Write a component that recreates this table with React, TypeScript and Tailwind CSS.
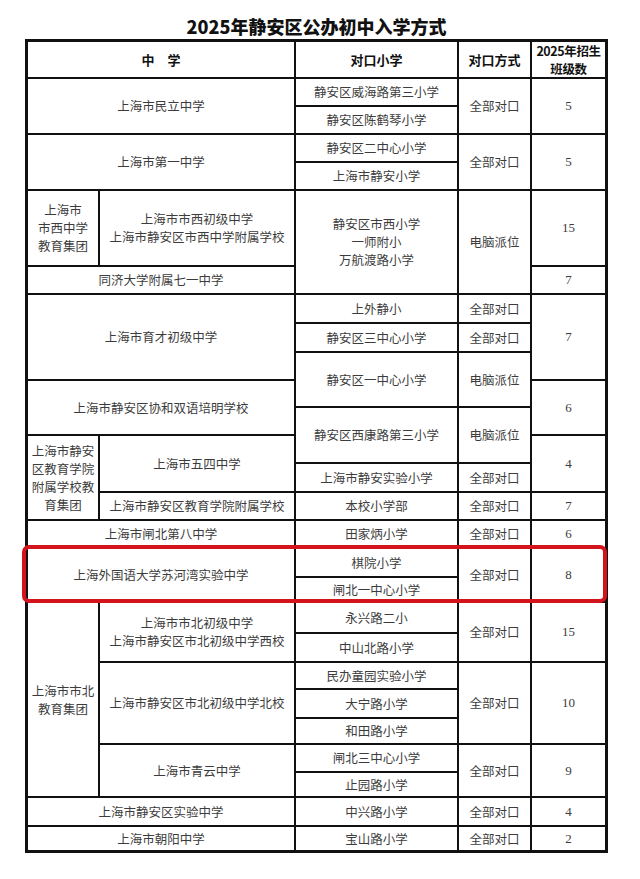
import React from "react";

type CellProps = {
  className?: string;
  children?: React.ReactNode;
};

// plain table cell: white box sitting in the black grid gap lines
function Cell({ className = "", children }: CellProps) {
  return (
    <div
      className={`bg-white flex flex-col items-center justify-center text-center leading-[18px] text-[12.5px] text-[#3c3c3c] ${className}`}
    >
      {children}
    </div>
  );
}

function Num({ className = "", children }: CellProps) {
  return (
    <Cell className={`font-['Liberation_Serif',serif] text-[13px] ${className}`}>
      {children}
    </Cell>
  );
}

export default function App() {
  return (
    <div className="min-h-[879px] bg-white font-['Noto_Sans_CJK_SC',sans-serif]">
      <div className="ml-[25px] w-[583px] h-[39px] pt-[14px] text-center text-[18px] leading-[24px] font-black text-[#111]">
        2025年静安区公办初中入学方式
      </div>

      <div className="ml-[25px] w-[583px] grid gap-[2px] border-[3px] border-[#111] bg-[#111] grid-cols-[70px_194px_161px_71px_73px] grid-rows-[35px_26px_26px_26px_26px_74px_26px_27px_27px_26px_25px_26px_26px_27px_26px_26px_27px_23px_29px_27px_25px_27px_24px_26px_23px_27px_23px]">
        {/* header */}
        <Cell className="col-start-1 col-end-3 row-start-1 row-end-2 font-bold text-[13px] text-[#111]">
          中　学
        </Cell>
        <Cell className="col-start-3 col-end-4 row-start-1 row-end-2 font-bold text-[13px] text-[#111]">
          对口小学
        </Cell>
        <Cell className="col-start-4 col-end-5 row-start-1 row-end-2 font-bold text-[13px] text-[#111]">
          对口方式
        </Cell>
        <Cell className="col-start-5 col-end-6 row-start-1 row-end-2 font-bold text-[11.5px] text-[#111] tracking-[-0.4px] leading-[17px]">
          <span>2025年招生</span>
          <span>班级数</span>
        </Cell>

        {/* 民立 */}
        <Cell className="col-start-1 col-end-3 row-start-2 row-end-4">上海市民立中学</Cell>
        <Cell className="col-start-3 col-end-4 row-start-2 row-end-3">静安区威海路第三小学</Cell>
        <Cell className="col-start-3 col-end-4 row-start-3 row-end-4">静安区陈鹤琴小学</Cell>
        <Cell className="col-start-4 col-end-5 row-start-2 row-end-4">全部对口</Cell>
        <Num className="col-start-5 col-end-6 row-start-2 row-end-4">5</Num>

        {/* 第一 */}
        <Cell className="col-start-1 col-end-3 row-start-4 row-end-6">上海市第一中学</Cell>
        <Cell className="col-start-3 col-end-4 row-start-4 row-end-5">静安区二中心小学</Cell>
        <Cell className="col-start-3 col-end-4 row-start-5 row-end-6">上海市静安小学</Cell>
        <Cell className="col-start-4 col-end-5 row-start-4 row-end-6">全部对口</Cell>
        <Num className="col-start-5 col-end-6 row-start-4 row-end-6">5</Num>

        {/* 市西 */}
        <Cell className="col-start-1 col-end-2 row-start-6 row-end-7">
          <span>上海市</span>
          <span>市西中学</span>
          <span>教育集团</span>
        </Cell>
        <Cell className="col-start-2 col-end-3 row-start-6 row-end-7">
          <span>上海市市西初级中学</span>
          <span>上海市静安区市西中学附属学校</span>
        </Cell>
        <Cell className="col-start-3 col-end-4 row-start-6 row-end-8">
          <span>静安区市西小学</span>
          <span>一师附小</span>
          <span>万航渡路小学</span>
        </Cell>
        <Cell className="col-start-4 col-end-5 row-start-6 row-end-8">电脑派位</Cell>
        <Num className="col-start-5 col-end-6 row-start-6 row-end-7">15</Num>
        <Cell className="col-start-1 col-end-3 row-start-7 row-end-8">同济大学附属七一中学</Cell>
        <Num className="col-start-5 col-end-6 row-start-7 row-end-8">7</Num>

        {/* 育才 / 协和 */}
        <Cell className="col-start-1 col-end-3 row-start-8 row-end-11">上海市育才初级中学</Cell>
        <Cell className="col-start-3 col-end-4 row-start-8 row-end-9">上外静小</Cell>
        <Cell className="col-start-4 col-end-5 row-start-8 row-end-9">全部对口</Cell>
        <Cell className="col-start-3 col-end-4 row-start-9 row-end-10">静安区三中心小学</Cell>
        <Cell className="col-start-4 col-end-5 row-start-9 row-end-10">全部对口</Cell>
        <Cell className="col-start-3 col-end-4 row-start-10 row-end-12">静安区一中心小学</Cell>
        <Cell className="col-start-4 col-end-5 row-start-10 row-end-12">电脑派位</Cell>
        <Num className="col-start-5 col-end-6 row-start-8 row-end-11">7</Num>
        <Cell className="col-start-1 col-end-3 row-start-11 row-end-13">上海市静安区协和双语培明学校</Cell>
        <Num className="col-start-5 col-end-6 row-start-11 row-end-13">6</Num>
        <Cell className="col-start-3 col-end-4 row-start-12 row-end-14">静安区西康路第三小学</Cell>
        <Cell className="col-start-4 col-end-5 row-start-12 row-end-14">电脑派位</Cell>

        {/* 教育学院 group */}
        <Cell className="col-start-1 col-end-2 row-start-13 row-end-16">
          <span>上海市静安</span>
          <span>区教育学院</span>
          <span>附属学校教</span>
          <span>育集团</span>
        </Cell>
        <Cell className="col-start-2 col-end-3 row-start-13 row-end-15">上海市五四中学</Cell>
        <Cell className="col-start-3 col-end-4 row-start-14 row-end-15">上海市静安实验小学</Cell>
        <Cell className="col-start-4 col-end-5 row-start-14 row-end-15">全部对口</Cell>
        <Num className="col-start-5 col-end-6 row-start-13 row-end-15">4</Num>
        <Cell className="col-start-2 col-end-3 row-start-15 row-end-16">上海市静安区教育学院附属学校</Cell>
        <Cell className="col-start-3 col-end-4 row-start-15 row-end-16">本校小学部</Cell>
        <Cell className="col-start-4 col-end-5 row-start-15 row-end-16">全部对口</Cell>
        <Num className="col-start-5 col-end-6 row-start-15 row-end-16">7</Num>

        {/* 闸北第八 */}
        <Cell className="col-start-1 col-end-3 row-start-16 row-end-17">上海市闸北第八中学</Cell>
        <Cell className="col-start-3 col-end-4 row-start-16 row-end-17">田家炳小学</Cell>
        <Cell className="col-start-4 col-end-5 row-start-16 row-end-17">全部对口</Cell>
        <Num className="col-start-5 col-end-6 row-start-16 row-end-17">6</Num>

        {/* 苏河湾 */}
        <Cell className="col-start-1 col-end-3 row-start-17 row-end-19">上海外国语大学苏河湾实验中学</Cell>
        <Cell className="col-start-3 col-end-4 row-start-17 row-end-18">棋院小学</Cell>
        <Cell className="col-start-3 col-end-4 row-start-18 row-end-19">闸北一中心小学</Cell>
        <Cell className="col-start-4 col-end-5 row-start-17 row-end-19">全部对口</Cell>
        <Num className="col-start-5 col-end-6 row-start-17 row-end-19">8</Num>
        {/* highlight frame */}
        <div className="col-start-1 col-end-6 row-start-17 row-end-19 -mt-[4px] -mb-[2px] -ml-[6px] -mr-[2px] border-[4px] border-[#d3141c] rounded-[7px] pointer-events-none z-10" />

        {/* 市北 group */}
        <Cell className="col-start-1 col-end-2 row-start-19 row-end-26">
          <span>上海市市北</span>
          <span>教育集团</span>
        </Cell>
        <Cell className="col-start-2 col-end-3 row-start-19 row-end-21">
          <span>上海市市北初级中学</span>
          <span>上海市静安区市北初级中学西校</span>
        </Cell>
        <Cell className="col-start-3 col-end-4 row-start-19 row-end-20">永兴路二小</Cell>
        <Cell className="col-start-3 col-end-4 row-start-20 row-end-21">中山北路小学</Cell>
        <Cell className="col-start-4 col-end-5 row-start-19 row-end-21">全部对口</Cell>
        <Num className="col-start-5 col-end-6 row-start-19 row-end-21">15</Num>

        <Cell className="col-start-2 col-end-3 row-start-21 row-end-24">上海市静安区市北初级中学北校</Cell>
        <Cell className="col-start-3 col-end-4 row-start-21 row-end-22">民办童园实验小学</Cell>
        <Cell className="col-start-3 col-end-4 row-start-22 row-end-23">大宁路小学</Cell>
        <Cell className="col-start-3 col-end-4 row-start-23 row-end-24">和田路小学</Cell>
        <Cell className="col-start-4 col-end-5 row-start-21 row-end-24">全部对口</Cell>
        <Num className="col-start-5 col-end-6 row-start-21 row-end-24">10</Num>

        <Cell className="col-start-2 col-end-3 row-start-24 row-end-26">上海市青云中学</Cell>
        <Cell className="col-start-3 col-end-4 row-start-24 row-end-25">闸北三中心小学</Cell>
        <Cell className="col-start-3 col-end-4 row-start-25 row-end-26">止园路小学</Cell>
        <Cell className="col-start-4 col-end-5 row-start-24 row-end-26">全部对口</Cell>
        <Num className="col-start-5 col-end-6 row-start-24 row-end-26">9</Num>

        {/* 实验 / 朝阳 */}
        <Cell className="col-start-1 col-end-3 row-start-26 row-end-27">上海市静安区实验中学</Cell>
        <Cell className="col-start-3 col-end-4 row-start-26 row-end-27">中兴路小学</Cell>
        <Cell className="col-start-4 col-end-5 row-start-26 row-end-27">全部对口</Cell>
        <Num className="col-start-5 col-end-6 row-start-26 row-end-27">4</Num>

        <Cell className="col-start-1 col-end-3 row-start-27 row-end-28">上海市朝阳中学</Cell>
        <Cell className="col-start-3 col-end-4 row-start-27 row-end-28">宝山路小学</Cell>
        <Cell className="col-start-4 col-end-5 row-start-27 row-end-28">全部对口</Cell>
        <Num className="col-start-5 col-end-6 row-start-27 row-end-28">2</Num>
      </div>
    </div>
  );
}
